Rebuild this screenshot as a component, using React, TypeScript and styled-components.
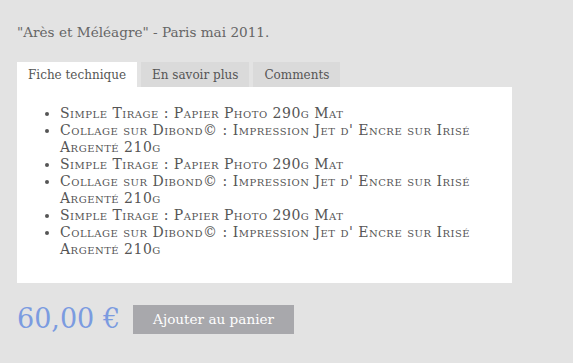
import styled, { createGlobalStyle } from "styled-components";

const GlobalStyle = createGlobalStyle`
  html, body {
    margin: 0;
    padding: 0;
    background: #e3e3e3;
  }
  body {
    font-family: "DejaVu Serif", "Liberation Serif", serif;
  }
`;

const Page = styled.div`
  width: 573px;
  height: 363px;
  box-sizing: border-box;
  padding: 22px 0 0 17px;
  background: #e3e3e3;
  color: #666;
`;

const Title = styled.p`
  margin: 0 0 20px;
  font-size: 13.6px;
  line-height: 20px;
  color: #666;
`;

const Tabs = styled.div`
  display: flex;
  gap: 4px;
  height: 25px;
`;

const Tab = styled.div<{ active?: boolean }>`
  display: flex;
  align-items: center;
  padding: 0 11px;
  font-size: 12px;
  color: #555;
  background: ${p => (p.active ? "#ffffff" : "#dadada")};
  cursor: pointer;
`;

const Panel = styled.div`
  width: 495px;
  height: 196px;
  box-sizing: border-box;
  background: #fff;
  padding: 18px 28px 0 0;
`;

const List = styled.ul`
  margin: 0;
  padding-left: 43px;
`;

const Item = styled.li`
  font-size: 14px;
  line-height: 17px;
  letter-spacing: 0.5px;
  font-variant: small-caps;
  color: #555;
`;

const Buy = styled.div`
  display: flex;
  align-items: center;
  gap: 13px;
  margin-top: 21px;
`;

const Price = styled.span`
  font-size: 27px;
  color: #7b9be0;
  line-height: 30px;
`;

const CartButton = styled.button`
  width: 161px;
  height: 29px;
  border: none;
  background: #a8a8ac;
  color: #fff;
  font-family: "DejaVu Serif", "Liberation Serif", serif;
  font-size: 13.6px;
  cursor: pointer;
`;

const items = [
  "Simple Tirage : Papier Photo 290g Mat",
  "Collage sur Dibond© : Impression Jet d' Encre sur Irisé Argenté 210g",
];

export default function App() {
  return (
    <Page>
      <GlobalStyle />
      <Title>"Arès et Méléagre" - Paris mai 2011.</Title>
      <Tabs>
        <Tab active>Fiche technique</Tab>
        <Tab>En savoir plus</Tab>
        <Tab>Comments</Tab>
      </Tabs>
      <Panel>
        <List>
          {[0, 1, 2].flatMap(i =>
            items.map((t, j) => <Item key={`${i}-${j}`}>{t}</Item>)
          )}
        </List>
      </Panel>
      <Buy>
        <Price>60,00 €</Price>
        <CartButton>Ajouter au panier</CartButton>
      </Buy>
    </Page>
  );
}
